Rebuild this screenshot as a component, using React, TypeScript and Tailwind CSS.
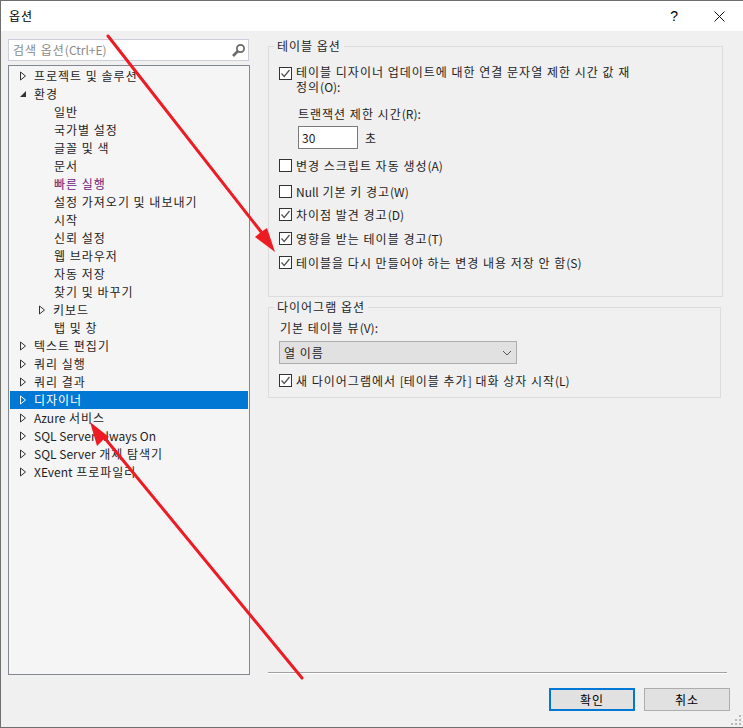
import type { ReactNode } from 'react';

const font = { fontFamily: '"Noto Sans CJK KR", "Noto Sans", sans-serif' };

type TreeItem = { label: string; depth: number; arrow?: 'closed' | 'open'; selected?: boolean; purple?: boolean };

const treeItems: TreeItem[] = [
    { label: '프로젝트 및 솔루션', depth: 0, arrow: 'closed' },
    { label: '환경', depth: 0, arrow: 'open' },
    { label: '일반', depth: 1 },
    { label: '국가별 설정', depth: 1 },
    { label: '글꼴 및 색', depth: 1 },
    { label: '문서', depth: 1 },
    { label: '빠른 실행', depth: 1, purple: true },
    { label: '설정 가져오기 및 내보내기', depth: 1 },
    { label: '시작', depth: 1 },
    { label: '신뢰 설정', depth: 1 },
    { label: '웹 브라우저', depth: 1 },
    { label: '자동 저장', depth: 1 },
    { label: '찾기 및 바꾸기', depth: 1 },
    { label: '키보드', depth: 1, arrow: 'closed' },
    { label: '탭 및 창', depth: 1 },
    { label: '텍스트 편집기', depth: 0, arrow: 'closed' },
    { label: '쿼리 실행', depth: 0, arrow: 'closed' },
    { label: '쿼리 결과', depth: 0, arrow: 'closed' },
    { label: '디자이너', depth: 0, arrow: 'closed', selected: true },
    { label: 'Azure 서비스', depth: 0, arrow: 'closed' },
    { label: 'SQL Server Always On', depth: 0, arrow: 'closed' },
    { label: 'SQL Server 개체 탐색기', depth: 0, arrow: 'closed' },
    { label: 'XEvent 프로파일러', depth: 0, arrow: 'closed' },
];

// hangul runs are wider in the original font, latin runs are not
const Txt = ({ text }: { text: string }) => (
    <>
        {text.split(/([A-Za-z0-9()+:\[\]]+(?: [A-Za-z0-9()+:\[\]]+)*)/).map((part, i) =>
            i % 2 === 1 ? (
                <span key={i}>{part}</span>
            ) : (
                <span key={i} className="tracking-[1px]">
                    {part}
                </span>
            )
        )}
    </>
);

const TreeArrow = ({ kind, selected }: { kind?: 'closed' | 'open'; selected?: boolean }) => {
    if (!kind) return <span className="w-[8px] h-[10px]" />;
    return (
        <svg width="8" height="10" viewBox="0 0 8 10" className="shrink-0">
            {kind === 'closed' ? (
                <path d="M1.5 1 L6.5 5 L1.5 9 Z" fill="none" stroke={selected ? '#ffffff' : '#333333'} strokeWidth="1" />
            ) : (
                <path d="M1 8 L7 8 L7 2 Z" fill="#333333" />
            )}
        </svg>
    );
};

const TreeRow = ({ item }: { item: TreeItem }) => (
    <div className={`flex items-center h-[18px] ${item.selected ? 'bg-[#0078d4] text-white' : 'text-[#1e1e1e]'} ${item.depth === 1 ? (item.arrow ? 'pl-[28px]' : 'pl-[44px]') : 'pl-[9px]'}`}>
        {(item.depth === 0 || item.arrow) && <TreeArrow kind={item.arrow} selected={item.selected} />}
        <span className={`whitespace-nowrap text-[12px] ${item.depth === 0 || item.arrow ? 'ml-[7px]' : ''} ${item.purple ? 'text-[#68217a]' : ''}`}>
            <Txt text={item.label} />
        </span>
    </div>
);

const Check = ({ checked, className, boxClass, children }: { checked?: boolean; className?: string; boxClass?: string; children: ReactNode }) => (
    <div className={`flex items-start gap-[4px] text-[12px] text-[#1e1e1e] leading-[15px] ${className ?? ''}`}>
        <span className={`${boxClass ?? 'mt-[1px]'} w-[13px] h-[13px] border border-[#333333] bg-white shrink-0 flex items-center justify-center`}>
            {checked && (
                <svg width="11" height="11" viewBox="0 0 11 11">
                    <path d="M1.5 5.5 L4.2 8.5 L9.5 2" fill="none" stroke="#555555" strokeWidth="1.3" />
                </svg>
            )}
        </span>
        <span>{children}</span>
    </div>
);

const App = () => {
    return (
        <div className="relative w-[743px] h-[728px] bg-[#f0f0f0] border-l border-b border-[#6f6f6f] flex flex-col overflow-hidden" style={font}>
            {/* title bar */}
            <div className="h-[31px] bg-white flex items-center shrink-0 text-[12px] text-black border-t border-[#6f6f6f]">
                <span className="ml-[8px]">
                    <Txt text="옵션" />
                </span>
                <span className="ml-auto mr-[36px] text-[14px] leading-none" style={{ fontFamily: '"Liberation Sans", sans-serif' }}>
                    ?
                </span>
                <svg width="11" height="11" viewBox="0 0 11 11" className="mr-[18px]">
                    <path d="M0.5 0.5 L10.5 10.5 M10.5 0.5 L0.5 10.5" fill="none" stroke="#111111" strokeWidth="1" />
                </svg>
            </div>

            <div className="flex flex-1 min-h-0">
                {/* left: search and tree */}
                <div className="w-[249px] ml-[7px] mt-[8px] shrink-0 flex flex-col">
                    <div className="h-[22px] w-[241px] bg-white border border-[#cccedb] flex items-center pl-[4px] pr-[2px] shrink-0">
                        <span className="text-[12px] text-[#8a8a8a]">
                            <Txt text="검색 옵션(Ctrl+E)" />
                        </span>
                        <svg width="15" height="15" viewBox="0 0 15 15" className="ml-auto">
                            <circle cx="9.5" cy="5.5" r="3.6" fill="none" stroke="#6b6b6b" strokeWidth="1.8" />
                            <path d="M7 8 L2 13" stroke="#6b6b6b" strokeWidth="2.6" />
                        </svg>
                    </div>
                    <div className="mt-[4px] w-[242px] h-[610px] bg-[#f5f5f5] border border-[#828790] pt-[1px] px-[1px]">
                        {treeItems.map((item) => (
                            <TreeRow key={item.label} item={item} />
                        ))}
                    </div>
                </div>

                {/* right: options */}
                <div className="ml-[11px] flex-1 flex flex-col text-[12px] text-[#1e1e1e]">
                    <fieldset className="mt-[7px] w-[455px] h-[259px] border border-[#dcdcdc] pl-[10px] pt-[10px]">
                        <legend className="-ml-[5px] px-[3px] text-[12px] leading-[16px]">
                            <Txt text="테이블 옵션" />
                        </legend>
                        <div className="w-[352px]">
                            <Check checked boxClass="mt-[3px]">
                                <Txt text="테이블 디자이너 업데이트에 대한 연결 문자열 제한 시간 값 재정의(O):" />
                            </Check>
                        </div>
                        <div className="ml-[19px] mt-[12px] leading-[15px]">
                            <Txt text="트랜잭션 제한 시간(R):" />
                        </div>
                        <div className="ml-[19px] mt-[5px] flex items-center gap-[7px]">
                            <div className="w-[60px] h-[23px] bg-white border border-[#7a7a7a] pl-[3px] flex items-center text-[12px]">30</div>
                            <span>초</span>
                        </div>
                        <Check className="mt-[9px]">
                            <Txt text="변경 스크립트 자동 생성(A)" />
                        </Check>
                        <Check className="mt-[11px]">
                            <Txt text="Null 기본 키 경고(W)" />
                        </Check>
                        <Check checked className="mt-[8px]">
                            <Txt text="차이점 발견 경고(D)" />
                        </Check>
                        <Check checked className="mt-[9px]">
                            <Txt text="영향을 받는 테이블 경고(T)" />
                        </Check>
                        <Check checked className="mt-[9px]">
                            <Txt text="테이블을 다시 만들어야 하는 변경 내용 저장 안 함(S)" />
                        </Check>
                    </fieldset>

                    <fieldset className="mt-[2px] w-[453px] h-[99px] border border-[#dcdcdc] pl-[10px] pt-[5px]">
                        <legend className="-ml-[5px] px-[3px] text-[12px] leading-[16px]">
                            <Txt text="다이어그램 옵션" />
                        </legend>
                        <div className="ml-[1px] leading-[15px]">
                            <Txt text="기본 테이블 뷰(V):" />
                        </div>
                        <div className="mt-[6px] w-[238px] h-[23px] bg-[#e1e1e1] border border-[#adadad] flex items-center pl-[4px] pr-[4px]">
                            <span>
                                <Txt text="열 이름" />
                            </span>
                            <svg width="10" height="6" viewBox="0 0 10 6" className="ml-auto">
                                <path d="M1 1 L5 5 L9 1" fill="none" stroke="#555555" strokeWidth="1" />
                            </svg>
                        </div>
                        <Check checked className="mt-[9px]">
                            <Txt text="새 다이어그램에서 [테이블 추가] 대화 상자 시작(L)" />
                        </Check>
                    </fieldset>

                    <div className="mt-[274px] w-[459px] h-[2px] bg-[#a0a0a0] border-b border-white" />

                    <div className="mt-[14px] flex gap-[9px] ml-[281px]">
                        <button className="w-[86px] h-[23px] bg-[#e1e1e1] border-2 border-[#0078d4] text-[12px] text-black">
                            <Txt text="확인" />
                        </button>
                        <button className="w-[86px] h-[23px] bg-[#e1e1e1] border border-[#adadad] text-[12px] text-black">
                            <Txt text="취소" />
                        </button>
                    </div>
                </div>
            </div>

            {/* size grip */}
            <svg width="11" height="11" viewBox="0 0 11 11" className="absolute right-[1px] bottom-[1px]">
                <g fill="#b8b8b8">
                    <rect x="8" y="0" width="2" height="2" />
                    <rect x="4" y="4" width="2" height="2" />
                    <rect x="8" y="4" width="2" height="2" />
                    <rect x="0" y="8" width="2" height="2" />
                    <rect x="4" y="8" width="2" height="2" />
                    <rect x="8" y="8" width="2" height="2" />
                </g>
            </svg>

            {/* red annotation arrows */}
            <svg width="743" height="728" viewBox="0 0 743 728" className="absolute -left-px top-0 pointer-events-none">
                <path d="M108 36 L262 233" stroke="#ed1c24" strokeWidth="3" fill="none" strokeLinecap="round" />
                <path d="M275 252 L255 237 L261 232 L267 228 Z" fill="#ed1c24" />
                <path d="M302 678 L103 436" stroke="#ed1c24" strokeWidth="3" fill="none" strokeLinecap="round" />
                <path d="M90 422 L109 437 L103 440 L97 446 Z" fill="#ed1c24" />
            </svg>
        </div>
    );
};

export default App;
